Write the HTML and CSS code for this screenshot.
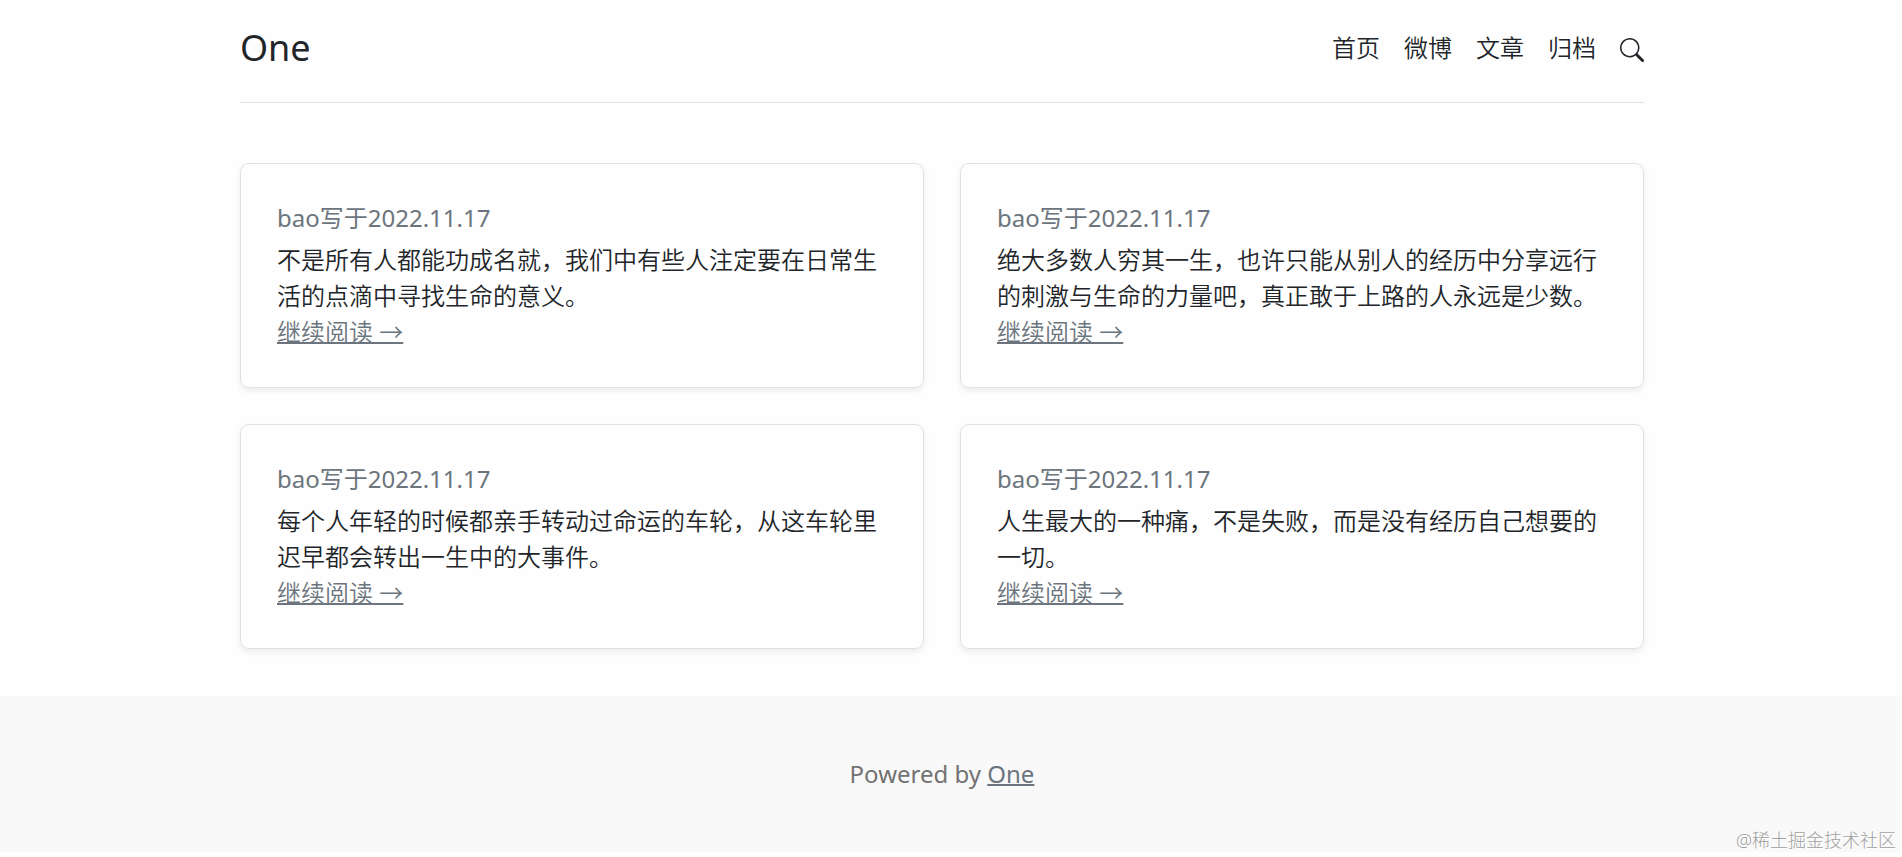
FILE: index.html
```html
<!DOCTYPE html>
<html lang="zh-CN">
<head>
    <meta charset="UTF-8">
    <meta name="viewport" content="width=device-width, initial-scale=1.0">
    <title>One</title>
    <link rel="stylesheet" href="styles.css">
</head>
<body>

    <div class="page">
        <div class="container">
            <header class="blog-header">
                <a class="brand" href="#">One</a>
                <nav class="blog-nav">
                    <a href="#">首页</a>
                    <a href="#">微博</a>
                    <a href="#">文章</a>
                    <a href="#">归档</a>
                    <a class="search-link" href="#" aria-label="搜索">
                        <svg width="24" height="24" viewBox="0 0 16 16" fill="currentColor" aria-hidden="true">
                            <path d="M11.742 10.344a6.5 6.5 0 1 0-1.397 1.398h-.001c.03.04.062.078.098.115l3.85 3.85a1 1 0 0 0 1.415-1.414l-3.85-3.85a1.007 1.007 0 0 0-.115-.1zM12 6.5a5.5 5.5 0 1 1-11 0 5.5 5.5 0 0 1 11 0z"/>
                        </svg>
                    </a>
                </nav>
            </header>

            <main class="post-grid">
                <article class="card">
                    <div class="post-meta">bao写于2022.11.17</div>
                    <p class="post-text">不是所有人都能功成名就，我们中有些人注定要在日常生活的点滴中寻找生命的意义。</p>
                    <a class="read-more" href="#">继续阅读 →</a>
                </article>
                <article class="card">
                    <div class="post-meta">bao写于2022.11.17</div>
                    <p class="post-text">绝大多数人穷其一生，也许只能从别人的经历中分享远行的刺激与生命的力量吧，真正敢于上路的人永远是少数。</p>
                    <a class="read-more" href="#">继续阅读 →</a>
                </article>
                <article class="card">
                    <div class="post-meta">bao写于2022.11.17</div>
                    <p class="post-text">每个人年轻的时候都亲手转动过命运的车轮，从这车轮里迟早都会转出一生中的大事件。</p>
                    <a class="read-more" href="#">继续阅读 →</a>
                </article>
                <article class="card">
                    <div class="post-meta">bao写于2022.11.17</div>
                    <p class="post-text">人生最大的一种痛，不是失败，而是没有经历自己想要的一切。</p>
                    <a class="read-more" href="#">继续阅读 →</a>
                </article>
            </main>
        </div>
    </div>

    <footer class="blog-footer">
        <p>Powered by <a href="#">One</a></p>
        <span class="watermark">@稀土掘金技术社区</span>
    </footer>

</body>
</html>
```
FILE: styles.css
```css
* { box-sizing: border-box; }
body {
    margin: 0;
    min-height: 100vh;
    font-family: "Noto Sans", "Noto Sans CJK SC", sans-serif;
    font-size: 24px;
    line-height: 36px;
    color: #212529;
    background-color: #fefefe;
}
p { margin: 0; }

.page, .blog-footer { padding-right: 18px; }

.container {
    max-width: 1440px;
    margin: 0 auto;
    padding: 0 18px;
}

/* Header */
.blog-header {
    display: flex;
    justify-content: space-between;
    align-items: center;
    padding: 21px 0 27px;
    border-bottom: 1px solid #dee2e6;
}
.brand {
    font-size: 36px;
    line-height: 54px;
    color: inherit;
    text-decoration: none;
}
.blog-nav {
    display: flex;
    align-items: center;
    gap: 24px;
    font-weight: 350;
}
.blog-nav a {
    color: inherit;
    text-decoration: none;
}
.search-link svg {
    display: block;
    margin-top: 3px;
}

/* Posts */
.post-grid {
    display: grid;
    grid-template-columns: 1fr 1fr;
    gap: 36px;
    padding: 60px 0 47px;
}
.card {
    padding: 36px 36px 37px;
    border: 1px solid #dee2e6;
    border-radius: 9px;
    box-shadow: 0 3px 6px rgba(0,0,0,0.075);
}
.post-meta {
    margin-bottom: 6px;
    color: #6c757d;
}
.post-text { font-weight: 350; }
.read-more {
    display: block;
    width: fit-content;
    font-weight: 350;
    color: #6c757d;
    text-decoration-thickness: 2px;
}

/* Footer */
.blog-footer {
    position: relative;
    padding-top: 60px;
    padding-bottom: 60px;
    text-align: center;
    color: #727272;
    background-color: #f9f9f9;
}
.blog-footer a {
    color: #6c757d;
    text-decoration-thickness: 2px;
}
.watermark {
    position: absolute;
    right: 6px;
    bottom: 0;
    font-size: 18px;
    line-height: 24px;
    font-weight: 300;
    color: #a0a0a0;
    text-shadow: 1px 1px 0 #fff;
}
```
